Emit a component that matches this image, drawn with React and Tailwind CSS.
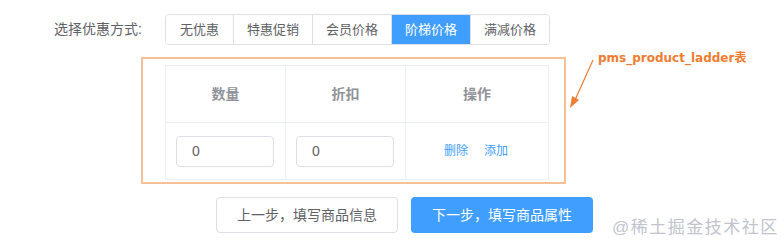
import React from "react";

const options = ["无优惠", "特惠促销", "会员价格", "阶梯价格", "满减价格"];
const widths = ["w-[67px]", "w-[79px]", "w-[79px]", "w-[79px]", "w-[79px]"];

export default function App() {
    const active = 3;
    return (
        <div
            className="relative w-[784px] h-[245px] bg-white overflow-hidden text-[#606266]"
            style={{fontFamily: '"Liberation Sans", "Noto Sans CJK SC", sans-serif'}}
        >
            <div className="flex items-center pt-[14px]">
                <div className="w-[165px] pl-[54px] text-[14px] leading-[31px]">选择优惠方式:</div>
                <div className="flex h-[31px] border border-[#dcdfe6] rounded-[4px] overflow-hidden">
                    {options.map((item, i) => (
                        <div
                            key={item}
                            className={
                                widths[i] +
                                " flex items-center justify-center text-[13px] " +
                                (i > 0 ? "border-l border-[#dcdfe6] " : "") +
                                (i === active ? "bg-[#409eff] text-white border-[#409eff]" : "bg-white text-[#606266]")
                            }
                        >
                            {item}
                        </div>
                    ))}
                </div>
            </div>

            <div className="ml-[141px] mt-[12px] w-[425px] h-[127px] border-2 border-[#f6bf95] pl-[22px] pt-[6px]">
                <div className="w-[384px] border border-[#ebeef5] text-[14px]">
                    <div className="flex h-[57px] border-b border-[#ebeef5] font-bold text-[#909399]">
                        <div className="w-[120px] flex items-center justify-center border-r border-[#ebeef5]">数量</div>
                        <div className="w-[120px] flex items-center justify-center border-r border-[#ebeef5]">折扣</div>
                        <div className="flex-1 flex items-center justify-center">操作</div>
                    </div>
                    <div className="flex h-[56px]">
                        <div className="w-[120px] flex items-center pl-[10px] border-r border-[#ebeef5]">
                            <div className="w-[98px] h-[31px] border border-[#dcdfe6] rounded-[4px] flex items-center pl-[15px] text-[14px]">0</div>
                        </div>
                        <div className="w-[120px] flex items-center pl-[10px] border-r border-[#ebeef5]">
                            <div className="w-[98px] h-[31px] border border-[#dcdfe6] rounded-[4px] flex items-center pl-[15px] text-[14px]">0</div>
                        </div>
                        <div className="flex-1 flex items-center justify-center gap-[16px] text-[12px] text-[#409eff] pr-[2px]">
                            <span>删除</span>
                            <span>添加</span>
                        </div>
                    </div>
                </div>
            </div>

            <div className="flex ml-[216px] mt-[13px] gap-[13px]">
                <div className="w-[182px] h-[36px] border border-[#dcdfe6] rounded-[4px] flex items-center justify-center text-[14px] text-[#606266]">
                    上一步，填写商品信息
                </div>
                <div className="w-[182px] h-[36px] bg-[#409eff] rounded-[4px] flex items-center justify-center text-[14px] text-white">
                    下一步，填写商品属性
                </div>
            </div>

            {/* annotation */}
            <div
                className="absolute left-[598px] top-[49px] text-[12px] font-bold text-[#ed7d31] leading-[18px]"
                style={{fontFamily: '"DejaVu Sans", "Noto Sans CJK SC", sans-serif'}}
            >
                pms_product_ladder表
            </div>
            <svg className="absolute left-[560px] top-[50px]" width="40" height="65" viewBox="0 0 40 65">
                <line x1="33" y1="10" x2="15" y2="50" stroke="#ed7d31" strokeWidth="1.2"/>
                <polygon points="10,58 12,46 19,50" fill="#ed7d31"/>
            </svg>

            <div className="absolute left-[612px] top-[215px] text-[17px] text-[#c0c4cc] tracking-[1.5px]">
                @稀土掘金技术社区
            </div>
        </div>
    );
}
